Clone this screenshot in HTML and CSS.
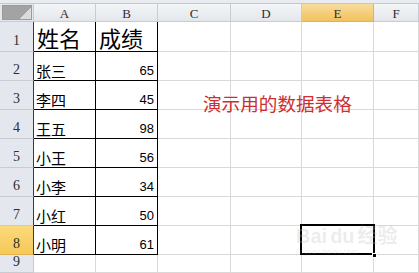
FILE: index.html
```html
<!DOCTYPE html>
<html>
<head>
<meta charset="utf-8">
<link rel="stylesheet" href="styles.css">
</head>
<body>
<div class="sheet">
  <div class="strip"></div>

  <div class="h corner"><span class="tri"></span></div>
  <div class="h col">A</div>
  <div class="h col">B</div>
  <div class="h col">C</div>
  <div class="h col">D</div>
  <div class="h col on">E</div>
  <div class="h col">F</div>

  <div class="h rh dk">1</div>
  <div class="c t big">姓名</div>
  <div class="c t big">成绩</div>
  <div class="c"></div><div class="c"></div><div class="c"></div><div class="c"></div>

  <div class="h rh dk">2</div>
  <div class="c t name">张三</div><div class="c t num">65</div>
  <div class="c"></div><div class="c"></div><div class="c"></div><div class="c"></div>

  <div class="h rh dk">3</div>
  <div class="c t name">李四</div><div class="c t num">45</div>
  <div class="c"></div><div class="c"></div><div class="c"></div><div class="c"></div>

  <div class="h rh dk">4</div>
  <div class="c t name">王五</div><div class="c t num">98</div>
  <div class="c"></div><div class="c"></div><div class="c"></div><div class="c"></div>

  <div class="h rh dk">5</div>
  <div class="c t name">小王</div><div class="c t num">56</div>
  <div class="c"></div><div class="c"></div><div class="c"></div><div class="c"></div>

  <div class="h rh dk">6</div>
  <div class="c t name">小李</div><div class="c t num">34</div>
  <div class="c"></div><div class="c"></div><div class="c"></div><div class="c"></div>

  <div class="h rh dk">7</div>
  <div class="c t name">小红</div><div class="c t num">50</div>
  <div class="c"></div><div class="c"></div><div class="c"></div><div class="c"></div>

  <div class="h rh dk on">8</div>
  <div class="c t name">小明</div><div class="c t num">61</div>
  <div class="c"></div><div class="c"></div><div class="c sel"><span class="handle"></span></div><div class="c"></div>

  <div class="h rh">9</div>
  <div class="c"></div><div class="c"></div><div class="c"></div><div class="c"></div><div class="c"></div><div class="c"></div>

  <div class="label">演示用的数据表格</div>
  <div class="mark"><span class="mk1">Bai<span class="paw">du</span>经验</span><span class="mk2">jingyan.baidu.com</span></div>
</div>
</body>
</html>
```
FILE: styles.css
```css
* { box-sizing: border-box; }
html, body { margin: 0; padding: 0; }
body {
  width: 419px;
  height: 273px;
  overflow: hidden;
  background: #fff;
  font-family: "Noto Sans CJK SC", "Liberation Sans", sans-serif;
}
.sheet {
  position: relative;
  display: grid;
  grid-template-columns: 34px 62px 62px 73px 71px 72px 1fr;
  grid-template-rows: 4px 18px 30px repeat(7, 29px) 1fr;
  width: 419px;
  height: 273px;
  overflow: hidden;
}
.strip {
  grid-column: 1 / -1;
  background: #e8ebef;
  border-bottom: 1px solid #c2c8d1;
}
.h {
  background: linear-gradient(#f3f5f7, #e3e7ec);
  border-right: 1px solid #c7ccd3;
  border-bottom: 1px solid #c7ccd3;
  color: #2e2e2e;
  font-family: "Liberation Serif", "DejaVu Serif", serif;
  display: flex;
  justify-content: center;
}
.col {
  font-size: 13px;
  align-items: center;
  line-height: 1;
  padding-top: 1px;
}
.corner {
  background: #e4e8ec;
  padding: 1px 1px 1px 2px;
  display: block;
}
.corner .tri {
  display: block;
  width: 100%;
  height: 100%;
  background: linear-gradient(135deg, #a3a3a3 0%, #a3a3a3 72%, #dcdcdc 72%, #dcdcdc 100%);
  border: 1px solid #9a9a9a;
}
.rh {
  background: #e4e8ee;
  font-size: 14px;
  align-items: flex-end;
  padding-bottom: 3px;
  line-height: 1;
}
.rh.dk { border-right-color: #3a3a3a; }
.on {
  background: linear-gradient(#f9dc9c, #f1c25e);
  border-right-color: #e5b24f;
  border-bottom-color: #e5b24f;
}
.rh.on { background: linear-gradient(#fbd97a, #f6c95a); border-right-color: #3a3a3a; }
.c {
  border-right: 1px solid #d9d9d9;
  border-bottom: 1px solid #d9d9d9;
}
.t {
  border-right-color: #000;
  border-bottom-color: #000;
  display: flex;
  align-items: flex-end;
  line-height: 1;
  color: #000;
}
.big {
  font-size: 22px;
  padding: 0 0 3px 3px;
}
.name {
  font-size: 15px;
  padding: 0 0 2px 2px;
}
.num {
  font-family: "Liberation Sans", "DejaVu Sans", sans-serif;
  font-size: 13px;
  justify-content: flex-end;
  padding: 0 3px 3px 0;
}
.sel { position: relative; }
.sel::after {
  content: "";
  position: absolute;
  left: -2px;
  top: -2px;
  right: -2px;
  bottom: -1px;
  border: 2px solid #000;
}
.handle {
  position: absolute;
  right: -4px;
  bottom: -4px;
  width: 5px;
  height: 5px;
  background: #000;
  border: 1px solid #fff;
  z-index: 2;
}
.label {
  position: absolute;
  left: 203px;
  top: 94px;
  font-size: 18.6px;
  line-height: 18px;
  color: #cc2f2f;
  white-space: nowrap;
}
.mark {
  position: absolute;
  left: 296px;
  top: 226px;
  display: flex;
  flex-direction: column;
  color: rgba(190, 190, 190, 0.28);
  line-height: 1;
  pointer-events: none;
}
.mk1 {
  font-family: "Liberation Sans", "Noto Sans CJK SC", sans-serif;
  font-size: 20px;
  font-weight: bold;
}
.paw { margin: 0 3px; }
.mk2 {
  font-family: "Liberation Sans", sans-serif;
  font-size: 7px;
  margin-top: 2px;
  letter-spacing: 0.3px;
}
```
